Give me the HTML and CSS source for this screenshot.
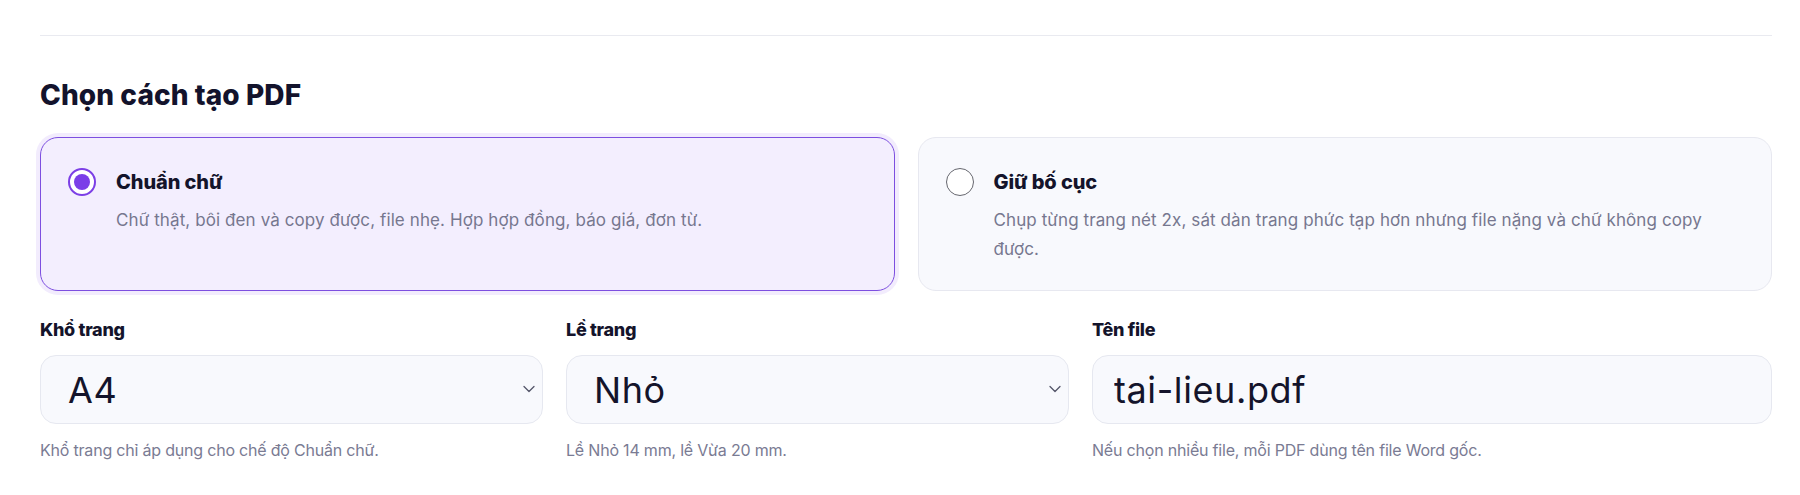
FILE: index.html
```html
<!DOCTYPE html>
<html lang="vi">
<head>
<meta charset="utf-8">
<title>Chọn cách tạo PDF</title>
<link rel="stylesheet" href="styles.css">
</head>
<body>
<main class="page">
  <section class="section">
    <h2 class="heading">Chọn cách tạo PDF</h2>
    <div class="modes">
      <label class="mode mode--active">
        <span class="radio radio--checked"><span class="radio-dot"></span></span>
        <span class="mode-text">
          <span class="mode-title">Chuẩn chữ</span>
          <span class="mode-desc">Chữ thật, bôi đen và copy được, file nhẹ. Hợp hợp đồng, báo giá, đơn từ.</span>
        </span>
      </label>
      <label class="mode">
        <span class="radio"></span>
        <span class="mode-text">
          <span class="mode-title">Giữ bố cục</span>
          <span class="mode-desc">Chụp từng trang nét 2x, sát dàn trang phức tạp hơn nhưng file nặng và chữ không copy được.</span>
        </span>
      </label>
    </div>
    <div class="fields">
      <div class="field">
        <div class="field-label">Khổ trang</div>
        <div class="select-wrap">
          <select class="control control--select"><option>A4</option></select>
          <svg class="chevron" viewBox="0 0 12 8" width="12" height="8"><path d="M1 1.5 6 6.5 11 1.5" fill="none" stroke="#55566a" stroke-width="1.3" stroke-linecap="round" stroke-linejoin="round"/></svg>
        </div>
        <div class="field-help">Khổ trang chỉ áp dụng cho chế độ Chuẩn chữ.</div>
      </div>
      <div class="field">
        <div class="field-label">Lề trang</div>
        <div class="select-wrap">
          <select class="control control--select"><option>Nhỏ</option></select>
          <svg class="chevron" viewBox="0 0 12 8" width="12" height="8"><path d="M1 1.5 6 6.5 11 1.5" fill="none" stroke="#55566a" stroke-width="1.3" stroke-linecap="round" stroke-linejoin="round"/></svg>
        </div>
        <div class="field-help">Lề Nhỏ 14 mm, lề Vừa 20 mm.</div>
      </div>
      <div class="field">
        <div class="field-label">Tên file</div>
        <input class="control control--input" type="text" value="tai-lieu.pdf">
        <div class="field-help">Nếu chọn nhiều file, mỗi PDF dùng tên file Word gốc.</div>
      </div>
    </div>
  </section>
</main>
</body>
</html>
```

FILE: styles.css
```css
* { box-sizing: border-box; }

html, body {
  margin: 0;
  padding: 0;
  background: #ffffff;
}

body {
  font-family: Inter, "Noto Sans", "DejaVu Sans", sans-serif;
  color: #14142b;
}

.page {
  padding: 35px 28px 0 40px;
}

.section {
  border-top: 1px solid #e9eaf0;
  padding-top: 41px;
}

.heading {
  margin: 0 0 24px;
  font-size: 28px;
  line-height: 36px;
  font-weight: 800;
  letter-spacing: 0.1px;
  color: #13132c;
}

.modes {
  display: grid;
  grid-template-columns: minmax(0, 1fr) minmax(0, 1fr);
  gap: 23px;
}

.mode {
  display: flex;
  align-items: flex-start;
  gap: 20px;
  padding: 30px 27px 24px 27px;
  min-height: 154px;
  border: 1px solid #e7e8f0;
  border-radius: 18px;
  background: #f8f9fd;
  cursor: pointer;
}

.mode--active {
  border: 1.5px solid #7d4fe0;
  background: #f3eefe;
  box-shadow: 0 0 0 4px #f2ecfd;
}

.radio {
  flex: 0 0 28px;
  width: 28px;
  height: 28px;
  border-radius: 50%;
  border: 1.5px solid #66676f;
  background: #ffffff;
  display: flex;
  align-items: center;
  justify-content: center;
}

.radio--checked {
  border: 2px solid #7c3fe6;
}

.radio-dot {
  width: 16px;
  height: 16px;
  border-radius: 50%;
  background: #7b3ee8;
}

.mode-text {
  display: flex;
  flex-direction: column;
  gap: 10px;
}

.mode-title {
  font-size: 20px;
  line-height: 28px;
  font-weight: 800;
  color: #14142b;
  letter-spacing: -0.1px;
}

.mode-desc {
  font-size: 17px;
  line-height: 29px;
  color: #76778f;
  letter-spacing: 0.1px;
  max-width: 735px;
}

.fields {
  display: grid;
  grid-template-columns: minmax(0, 503fr) minmax(0, 503fr) minmax(0, 680fr);
  gap: 23px;
  margin-top: 27px;
}

.field {
  display: flex;
  flex-direction: column;
  min-width: 0;
}

.field-label {
  font-size: 18px;
  line-height: 24px;
  font-weight: 800;
  color: #14142b;
  letter-spacing: -0.3px;
  margin-bottom: 13px;
}

.select-wrap {
  position: relative;
}

.control {
  display: block;
  width: 100%;
  min-width: 0;
  height: 69px;
  margin: 0;
  border: 1px solid #e6e8f0;
  border-radius: 16px;
  background: #f8f9fd;
  font-family: Inter, "Noto Sans", sans-serif;
  font-size: 36px;
  letter-spacing: 0.6px;
  color: #14142b;
  outline: none;
  -webkit-appearance: none;
  appearance: none;
}

.control--select {
  padding: 0 40px 0 27px;
}

.control--input {
  padding: 0 20px 0 21px;
}

.chevron {
  position: absolute;
  right: 8px;
  top: 30px;
}

.field-help {
  margin-top: 15px;
  font-size: 16px;
  line-height: 22px;
  letter-spacing: -0.2px;
  color: #7a7b93;
}
```
